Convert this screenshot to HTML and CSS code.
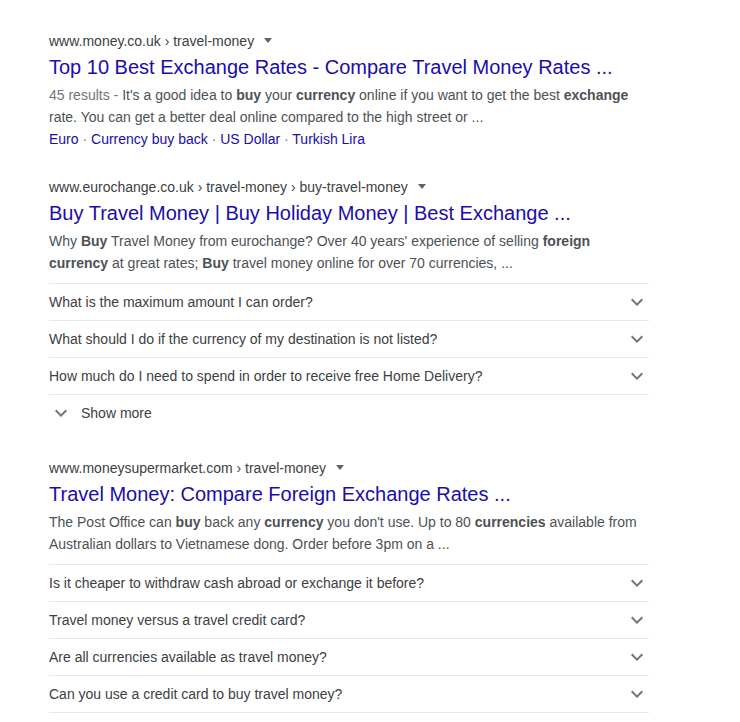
FILE: index.html
```html
<!DOCTYPE html>
<html lang="en">
<head>
  <meta charset="UTF-8" />
  <title>buy currency exchange - Search</title>
  <link rel="stylesheet" href="styles.css">
</head>
<body>
  <div id="results">
    <div class="tail">The best rate on holiday cash from a trusted UK bureau, order it online today and collect it in store</div>

    <div class="result">
      <div class="cite">www.money.co.uk › travel-money <span class="drop"></span></div>
      <a class="title" href="#">Top 10 Best Exchange Rates - Compare Travel Money Rates ...</a>
      <div class="snippet"><span class="meta">45 results - </span>It's a good idea to <b>buy</b> your <b>currency</b> online if you want to get the best <b>exchange</b> rate. You can get a better deal online compared to the high street or ...</div>
      <div class="sitelinks">
        <a href="#">Euro</a><span class="dot"> · </span><a href="#">Currency buy back</a><span class="dot"> · </span><a href="#">US Dollar</a><span class="dot"> · </span><a href="#">Turkish Lira</a>
      </div>
    </div>

    <div class="result">
      <div class="cite">www.eurochange.co.uk › travel-money › buy-travel-money <span class="drop"></span></div>
      <a class="title" href="#">Buy Travel Money | Buy Holiday Money | Best Exchange ...</a>
      <div class="snippet">Why <b>Buy</b> Travel Money from eurochange? Over 40 years' experience of selling <b>foreign currency</b> at great rates; <b>Buy</b> travel money online for over 70 currencies, ...</div>
      <ul class="faq">
        <li><span>What is the maximum amount I can order?</span><svg class="chev" viewBox="0 0 24 24"><path d="M7.41 8.59L12 13.17l4.59-4.58L18 10l-6 6-6-6z"/></svg></li>
        <li><span>What should I do if the currency of my destination is not listed?</span><svg class="chev" viewBox="0 0 24 24"><path d="M7.41 8.59L12 13.17l4.59-4.58L18 10l-6 6-6-6z"/></svg></li>
        <li><span>How much do I need to spend in order to receive free Home Delivery?</span><svg class="chev" viewBox="0 0 24 24"><path d="M7.41 8.59L12 13.17l4.59-4.58L18 10l-6 6-6-6z"/></svg></li>
      </ul>
      <div class="more"><svg class="chev" viewBox="0 0 24 24"><path d="M7.41 8.59L12 13.17l4.59-4.58L18 10l-6 6-6-6z"/></svg><span>Show more</span></div>
    </div>

    <div class="result">
      <div class="cite">www.moneysupermarket.com › travel-money <span class="drop"></span></div>
      <a class="title" href="#">Travel Money: Compare Foreign Exchange Rates ...</a>
      <div class="snippet">The Post Office can <b>buy</b> back any <b>currency</b> you don't use. Up to 80 <b>currencies</b> available from Australian dollars to Vietnamese dong. Order before 3pm on a ...</div>
      <ul class="faq">
        <li><span>Is it cheaper to withdraw cash abroad or exchange it before?</span><svg class="chev" viewBox="0 0 24 24"><path d="M7.41 8.59L12 13.17l4.59-4.58L18 10l-6 6-6-6z"/></svg></li>
        <li><span>Travel money versus a travel credit card?</span><svg class="chev" viewBox="0 0 24 24"><path d="M7.41 8.59L12 13.17l4.59-4.58L18 10l-6 6-6-6z"/></svg></li>
        <li><span>Are all currencies available as travel money?</span><svg class="chev" viewBox="0 0 24 24"><path d="M7.41 8.59L12 13.17l4.59-4.58L18 10l-6 6-6-6z"/></svg></li>
        <li><span>Can you use a credit card to buy travel money?</span><svg class="chev" viewBox="0 0 24 24"><path d="M7.41 8.59L12 13.17l4.59-4.58L18 10l-6 6-6-6z"/></svg></li>
      </ul>
    </div>
  </div>
</body>
</html>
```

FILE: styles.css
```css
html, body {
  margin: 0;
  padding: 0;
  background: #fff;
  font-family: "Liberation Sans", Arial, sans-serif;
}

#results {
  width: 600px;
  padding-left: 49px;
  overflow: hidden;
  height: 722px;
}

/* last line of the result above, scrolled almost out of view */
.tail {
  margin-top: -19px;
  font-size: 14px;
  line-height: 22px;
  color: #4d5156;
  white-space: nowrap;
  overflow: hidden;
}

.result {
  margin-top: 29px;
}

.result + .result {
  margin-top: 28px;
}

.cite {
  font-size: 14px;
  line-height: 18px;
  color: #3c4043;
}

.drop {
  display: inline-block;
  width: 0;
  height: 0;
  margin-left: 6px;
  vertical-align: 3px;
  border-left: 4px solid transparent;
  border-right: 4px solid transparent;
  border-top: 5px solid #5f6368;
}

.title {
  display: block;
  margin-top: 4px;
  font-size: 20px;
  line-height: 26px;
  color: #1a0dab;
  text-decoration: none;
  white-space: nowrap;
}

.snippet {
  margin-top: 4px;
  font-size: 14px;
  line-height: 22px;
  color: #4d5156;
}

.snippet b {
  color: #4d5156;
}

.meta {
  color: #70757a;
}

.sitelinks {
  font-size: 14px;
  line-height: 22px;
}

.sitelinks a {
  color: #1a0dab;
  text-decoration: none;
}

.dot {
  color: #70757a;
}

.faq {
  list-style: none;
  margin: 9px 0 0;
  padding: 0;
  border-top: 1px solid #e8e8e8;
}

.faq li {
  display: flex;
  align-items: center;
  justify-content: space-between;
  height: 36px;
  border-bottom: 1px solid #e8e8e8;
  font-size: 14px;
  color: #3c4043;
}

.chev {
  width: 24px;
  height: 24px;
  fill: #70757a;
  flex-shrink: 0;
}

.more {
  display: flex;
  align-items: center;
  gap: 8px;
  height: 36px;
  font-size: 14px;
  color: #3c4043;
}
```
